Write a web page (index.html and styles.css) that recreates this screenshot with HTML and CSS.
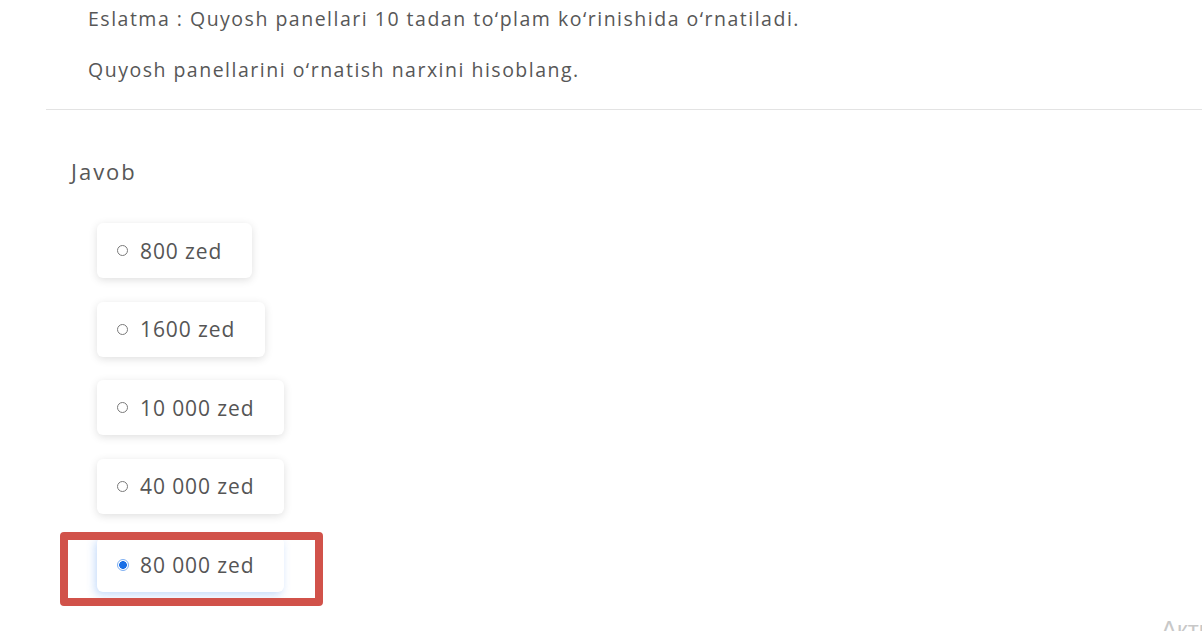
FILE: index.html
```html
<!DOCTYPE html>
<html lang="uz">
<head>
<meta charset="utf-8">
<title>Savol</title>
<link rel="stylesheet" href="styles.css">
</head>
<body>
<div class="page">
  <div class="question">
    <p class="qline first">Eslatma : Quyosh panellari 10 tadan to‘plam ko‘rinishida o‘rnatiladi.</p>
    <p class="qline">Quyosh panellarini o‘rnatish narxini hisoblang.</p>
  </div>
  <div class="divider"></div>
  <div class="answer">
    <div class="answer-label">Javob</div>
    <div class="options">
      <label class="option"><span class="radio"></span><span class="opt-text">800 zed</span></label>
      <label class="option"><span class="radio"></span><span class="opt-text">1600 zed</span></label>
      <label class="option"><span class="radio"></span><span class="opt-text">10 000 zed</span></label>
      <label class="option"><span class="radio"></span><span class="opt-text">40 000 zed</span></label>
      <label class="option selected"><span class="radio checked"></span><span class="opt-text">80 000 zed</span><span class="highlight"></span></label>
    </div>
  </div>
  <div class="watermark">Активация Windows</div>
</div>
</body>
</html>
```
FILE: styles.css
```css
html, body {
  margin: 0;
  padding: 0;
  background: #ffffff;
}
body {
  font-family: "Open Sans", "Noto Sans", sans-serif;
  color: #555555;
  width: 1202px;
  height: 631px;
  overflow: hidden;
}
.page {
  position: relative;
  width: 1202px;
  height: 631px;
  overflow: hidden;
}
.question {
  padding: 6px 0 0 88px;
}
.qline {
  margin: 0;
  font-size: 19.5px;
  line-height: 26px;
  letter-spacing: 1.5px;
  color: #575757;
  white-space: nowrap;
}
.qline + .qline {
  margin-top: 25px;
}
.divider {
  margin: 26px 0 0 46px;
  height: 1px;
  background: #e3e3e3;
}
.answer {
  padding-top: 48px;
}
.answer-label {
  padding-left: 71px;
  font-size: 22px;
  line-height: 26px;
  letter-spacing: 2px;
  color: #575757;
}
.options {
  padding: 39px 0 0 97px;
  display: flex;
  flex-direction: column;
  align-items: flex-start;
  gap: 23.5px;
}
.option {
  position: relative;
  display: flex;
  align-items: center;
  height: 55px;
  padding: 0 30px 0 20px;
  background: #ffffff;
  border-radius: 6px;
  box-shadow: 0 2px 8px rgba(0, 0, 0, 0.13);
  box-sizing: border-box;
}
.radio {
  width: 11px;
  height: 11px;
  border: 1.2px solid #7a7a7a;
  border-radius: 50%;
  box-sizing: border-box;
  margin-right: 12px;
  flex: none;
}
.radio.checked {
  width: 12px;
  height: 12px;
  margin-right: 11px;
  border: 1.5px solid #7fb0f2;
  background: radial-gradient(circle, #1a6fe6 0 3.6px, #ffffff 4.1px);
}
.opt-text {
  font-size: 21px;
  line-height: 28px;
  letter-spacing: 0.9px;
  color: #555555;
  white-space: nowrap;
}
.option.selected {
  box-shadow: -2px 3px 9px rgba(66, 140, 240, 0.3);
}
.highlight {
  position: absolute;
  left: -37px;
  top: -5px;
  width: 263px;
  height: 74px;
  border: 8px solid #d1524a;
  border-radius: 4px;
  box-sizing: border-box;
  pointer-events: none;
}
.watermark {
  position: absolute;
  left: 1161px;
  top: 615px;
  font-family: "Liberation Sans", sans-serif;
  font-size: 24px;
  line-height: 30px;
  color: #c8c8c8;
  white-space: nowrap;
}
```
